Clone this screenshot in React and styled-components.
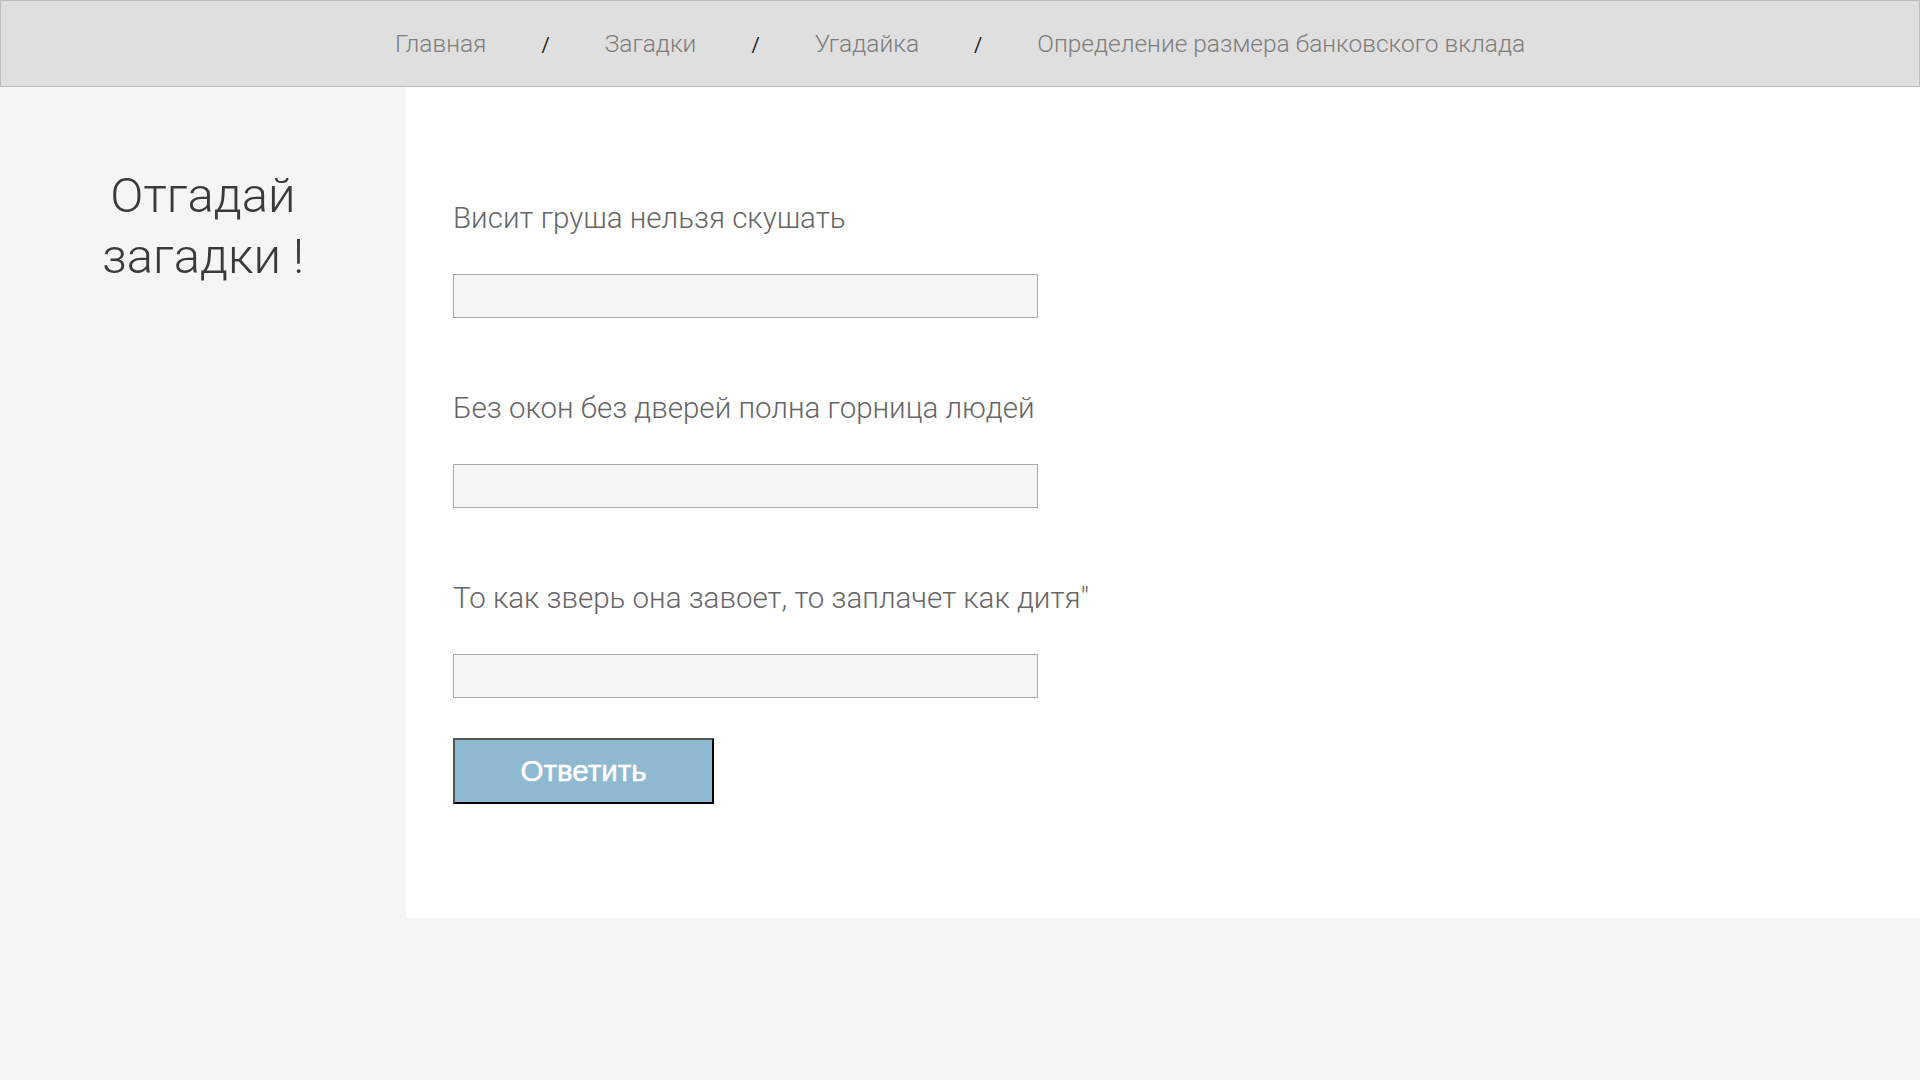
import styled, { createGlobalStyle } from 'styled-components';

const GlobalStyle = createGlobalStyle`
  html {
    overflow-y: scroll;
  }

  html, body {
    margin: 0;
    padding: 0;
    background: #f5f5f5;
  }

  body {
    font-family: Roboto, "Liberation Sans", sans-serif;
  }

  ::-webkit-scrollbar {
    width: 17px;
  }

  ::-webkit-scrollbar-track {
    background: #f1f1f1;
  }

  ::-webkit-scrollbar-thumb {
    background: #c1c1c1;
  }
`;

const Page = styled.div`
  min-height: 1279px;
  background: #f5f5f5;
`;

const NavBar = styled.nav`
  height: 85px;
  border: 1px solid #bdbdbd;
  background: #dfdfdf;
  display: flex;
  align-items: center;
  justify-content: center;
  font-family: "Roboto Light", Roboto, sans-serif;
  font-weight: 300;
  font-size: 24.5px;
`;

const NavLink = styled.a`
  color: #7d7d7d;
  text-decoration: none;
  cursor: pointer;
`;

const Slash = styled.span`
  color: #222;
  font-family: Roboto, sans-serif;
  font-weight: 400;
  font-size: 20px;
  margin: 0 55px;
`;

const Body = styled.div`
  display: flex;
`;

const Sidebar = styled.aside`
  width: 406px;
  flex-shrink: 0;
  padding-top: 78px;
  text-align: center;
`;

const Title = styled.h1`
  margin: 0;
  font-family: "Roboto Light", Roboto, sans-serif;
  font-weight: 300;
  font-size: 49px;
  line-height: 61px;
  color: #3a3a3a;
`;

const Main = styled.main`
  flex: 1;
  background: #fff;
  height: 831px;
  box-sizing: border-box;
  padding: 114px 0 0 47px;
`;

const Riddle = styled.div`
  display: flex;
  flex-direction: column;
  margin-bottom: ${(p) => (p.last ? '40px' : '73px')};
`;

const Question = styled.label`
  font-family: "Roboto Light", Roboto, sans-serif;
  font-size: 29.5px;
  font-weight: 300;
  line-height: 34px;
  color: #666;
  margin-bottom: 39px;
`;

const Answer = styled.input`
  width: 585px;
  height: 44px;
  box-sizing: border-box;
  border: 1px solid #a9a9a9;
  background: #f5f5f5;
  font-size: 20px;
  padding: 0 10px;
  outline: none;
`;

const SubmitButton = styled.button`
  width: 261px;
  height: 66px;
  background: #8fb8d1;
  border: 2px outset #555;
  border-right-color: #222;
  border-bottom-color: #222;
  color: #fff;
  font-family: "Liberation Sans", Arial, sans-serif;
  font-weight: 400;
  font-size: 29.5px;
  -webkit-text-stroke: 0.5px #fff;
  cursor: pointer;
`;

const links = ['Главная', 'Загадки', 'Угадайка', 'Определение размера банковского вклада'];

const riddles = [
  'Висит груша нельзя скушать',
  'Без окон без дверей полна горница людей',
  'То как зверь она завоет, то заплачет как дитя"',
];

const App = () => (
  <Page>
    <GlobalStyle />
    <NavBar>
      {links.map((name, i) => (
        <span key={name}>
          {i > 0 && <Slash>/</Slash>}
          <NavLink>{name}</NavLink>
        </span>
      ))}
    </NavBar>
    <Body>
      <Sidebar>
        <Title>
          Отгадай
          <br />
          загадки !
        </Title>
      </Sidebar>
      <Main>
        {riddles.map((text, i) => (
          <Riddle key={text} last={i === riddles.length - 1}>
            <Question>{text}</Question>
            <Answer type="text" />
          </Riddle>
        ))}
        <SubmitButton type="button">Ответить</SubmitButton>
      </Main>
    </Body>
  </Page>
);

export default App;
